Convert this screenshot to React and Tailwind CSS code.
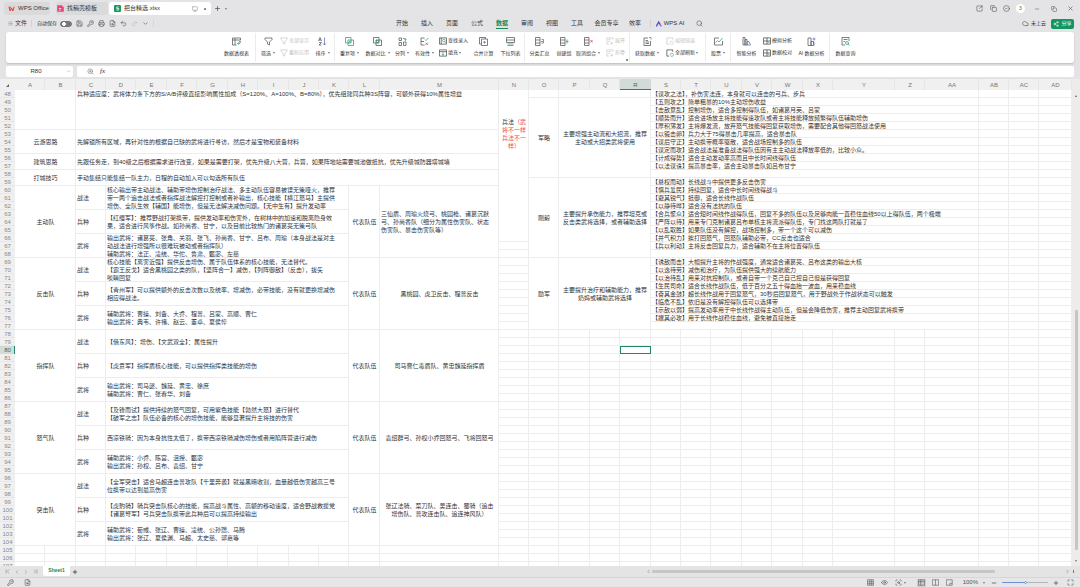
import { useState } from 'react';
import {
  Search, Menu, Save, Printer, Undo2, Redo2, ChevronDown, Plus, Minus, X, Copy, Cloud, Share2,
  ChevronLeft, ChevronRight, ChevronFirst, ChevronLast, Maximize, Eye, Monitor, CircleCheck, SquareArrowOutUpRight,
  ZoomIn, FileSearch, ScanSearch, KeyRound,
} from 'lucide-react';

const COLUMNS = [
  ['A', 'w-[30px]'], ['B', 'w-[31px]'], ['C', 'w-[30px]'], ['D', 'w-[30px]'], ['E', 'w-[31px]'], ['F', 'w-[30px]'],
  ['G', 'w-[31px]'], ['H', 'w-[30px]'], ['I', 'w-[31px]'], ['J', 'w-[30px]'], ['K', 'w-[30px]'], ['L', 'w-[31px]'],
  ['M', 'w-[119px]'], ['N', 'w-[30px]'], ['O', 'w-[30px]'], ['P', 'w-[31px]'], ['Q', 'w-[30px]'], ['R', 'w-[31px]'],
  ['S', 'w-[30px]'], ['T', 'w-[30px]'], ['U', 'w-[31px]'], ['V', 'w-[30px]'], ['W', 'w-[31px]'], ['X', 'w-[30px]'],
  ['Y', 'w-[62px]'], ['Z', 'w-[30px]'], ['AA', 'w-[54px]'], ['AB', 'w-[30px]'], ['AC', 'w-[30px]'], ['AD', ''],
];
const FIRST_ROW = 48;
const LAST_ROW = 107;

const TEAMS = [
  {
    name: '主动队',
    skills: '核心输出带主动战法、辅助带增伤控制治疗战法、多主动队伍容易被误无策哑火，推荐\n带一两个追击战法或者指挥战法解控打控制或者补输出，核心技能【横江怒马】主提供\n增伤、全队生效【辅国】能增伤，但是无法解决减伤问题。【无中生有】提升发动率',
    troops: '【红缨军】：推荐野战打架携带，提供发动率和伤害外，在树林中的加速和脱离隐身效\n果，适合进行风筝作战。如孙尚香、甘宁，以及目前比较热门的诸葛亮无策弓队',
    heroes: '输出武将：诸葛亮、张角、关羽、张飞、孙尚香、甘宁、吕布、周瑜（本身战法是对主\n动战法进行增强所以很难玩被动或者指挥队）\n辅助武将：法正、凌统、华佗、鲁肃、甄宓、左慈',
    squads: '三仙盾、周瑜火烧弓、桃园枪、诸葛沉默\n弓、孙尚香队（细分为属性伤害队、状态\n伤害队、暴击伤害队等）',
    squadsLeft: true,
  },
  {
    name: '反击队',
    skills: '核心技能【离害近强】提供反击增伤、属于队伍体系的核心技能，无法替代。\n【霸王反戈】适合黑桃园之类的队，【坚阵合一】减伤，【列阵御敌】（反击），拔矢\n啖睛回复',
    troops: '【青州军】可以提供额外的反击次数以及统率、增减伤，必带技能，没有就更换增减伤\n相应得战法。',
    heroes: '辅助武将：曹操、刘备、大乔、程普、吕蒙、高顺、曹仁\n输出武将：典韦、许褚、赵云、董卓、夏侯惇',
    squads: '黑桃园、虎卫反击、程普反击',
  },
  {
    name: '指挥队',
    skills: '【借东风】：增伤、【文武双全】：属性提升',
    troops: '【虎贲军】指挥盾核心技能，可以提供指挥类技能的增伤',
    heroes: '输出武将：司马懿、魏延、黄忠、徐庶\n辅助武将：曹仁、张春华、刘备',
    squads: '司马曹仁毒盾队、黄忠魏延指挥盾',
  },
  {
    name: '怒气队',
    skills: '【及锋而试】提供持续的怒气回复，可用紫色技能【勃然大怒】进行替代\n【破军之志】队伍必备的核心的增伤技能，能够显著提升主将技的伤害',
    troops: '西凉铁骑：因为本身抗性太低了，携带西凉铁骑减伤增伤或者用陷阵营进行减伤',
    heroes: '辅助武将：小乔、陈宫、沮授、甄宓\n输出武将：孙权、吕布、袁绍、甘宁',
    squads: '袁绍群弓、孙权小乔回怒弓、飞将回怒弓',
  },
  {
    name: '突击队',
    skills: '【全军突击】适合马超连击普攻队【千里奔袭】就是黑暗收割，血量越低伤害越高三号\n位携带以达到最高伤害',
    troops: '【虎豹骑】骑兵突击队核心的技能，提高战斗属性、高额的移动速度，适合野战救援党\n【诸葛弩军】弓兵突击队携带此兵种后可以提高持续输出',
    heroes: '辅助武将：荀彧、张辽、曹操、凌统、公孙瓒、马腾\n输出武将：张辽、夏侯渊、马超、太史慈、郭嘉等',
    squads: '张辽法骑、菜刀队、吴连击、蜀骑（追击\n增伤队、普攻连击队、追连神风队）',
  },
];

const NOTES = [
  '【谋攻之法】，补伤害法连，本身就可以连击的弓兵、步兵',
  '【五则攻之】简单粗暴的10%主动增伤收益',
  '【击敌意乱】控制增伤，适合多控制得队伍，如诸葛月英、吕蒙',
  '【顺势而升】适合进场放主将技能得速攻队或者主将技能释放频繁得队伍辅助增伤',
  '【厚积薄发】主将爆发流，放弃怒气技能得回复获取增伤，需要配合其他得回怒战法使用',
  '【以锻击卵】兵力大于75得暴击几率提高，适合暴击队',
  '【谋后守正】主动携带概率驱散，适合战场控制多的队伍',
  '【谋定而攻】适合战法是准备战法得队伍因有主主动战法释放率低的，比较小众。',
  '【计成得势】适合主动发动率高而且中长时间线得队伍',
  '【以法谋诛】提高暴击率，适合主动暴击队如吕布甘宁',
  '',
  '【悬权而动】长线战斗中提供更多反击伤害',
  '【慎兵爱民】持续回复，适合中长时间线得战斗',
  '【避其锐气】抵御，适合长线作战队伍',
  '【以静待哗】适合没有法抗的队伍',
  '【合兵聚众】适合短时间线作战得队伍，回复不多的队伍以及足够肉能一直稳住血线50以上得队伍，两个极端',
  '【严阵以待】用来专门克制诸葛吕布单核主将流派得队伍，专门找这两队打就是了',
  '【以乱取胜】如果队伍没有解控，战场控制多，带一个这个可以减伤',
  '【并气积力】挨打回怒气，回怒队辅助必带，CC反击也适合',
  '【兵以利动】主将反击回复兵力，适合辅助不在主将位置得队伍',
  '',
  '【诱敌而击】大幅提升主将的作战强度，通常适合诸葛亮、吕布这类的输出大核',
  '【以逸待劳】减伤和治疗，为队伍提供强大的续航能力',
  '【以治待乱】用来对抗控制队，或者自带一个克己自己控自己但是获得回复',
  '【生民司命】适合长线作战队伍，低于百分之五十得血抬一波血，用来稳血线',
  '【奋其金鼓】超长线作战用于回复怒气，30秒后回复怒气，用于野战处于作战状态可以触发',
  '【临危不乱】依旧是没有解控得队伍可以选择带',
  '【示敌以弱】提高发动率用于中长线作战得主动队伍，但是会降低伤害，推荐主动回复武将携带',
  '【攘其必攻】用于长线作战稳住血线，避免被直接抬走',
  '',
];

const colIndex = Object.fromEntries(COLUMNS.map(([name], i) => [name, i]));

// cell(from column, first row, to column, last row, content, extra classes)
const cell = (c1, r1, c2, r2, text, cls = 'text-left') => ({
  row: r1, col: colIndex[c1], rowSpan: r2 - r1 + 1, colSpan: colIndex[c2] - colIndex[c1] + 1, text, cls,
});

const TACTICS = (
  <>
    <div>兵法<span className="text-[#f04a4a]">（武</span></div>
    <div className="text-[#f04a4a]">将不一样</div>
    <div className="text-[#f04a4a]">兵法不一</div>
    <div className="text-[#f04a4a]">样）</div>
  </>
);

const MERGED = [
  cell('A', 48, 'B', 52, ''),
  cell('C', 48, 'M', 52, '兵种适应度：武将体力条下方的S/A/B评级直接影响属性加成（S=120%、A=100%、B=80%），优先组建同兵种3S阵容，可额外获得10%属性增益', 'text-left align-top'),
  cell('A', 53, 'B', 55, '云游思路', 'text-center'),
  cell('C', 53, 'M', 55, '先解锁所有区域，再针对性的根据自己缺的武将进行寻访，然后才是宝物和装备材料'),
  cell('A', 56, 'B', 57, '建筑思路', 'text-center'),
  cell('C', 56, 'M', 57, '先跟任务走，到40级之后根据需求进行改变，如果是需要打架，优先升级八大营，兵营，如果阵地站需要城池做抵抗，优先升级城防器塔城墙'),
  cell('A', 58, 'B', 59, '打城技巧', 'text-center'),
  cell('C', 58, 'M', 59, '手动集结只能集结一队主力，日程的自动加入可以勾选所有队伍'),
  ...TEAMS.flatMap((team, i) => {
    const top = 60 + i * 9;
    return [
      cell('A', top, 'B', top + 8, team.name, 'text-center'),
      cell('C', top, 'C', top + 2, '战法'),
      cell('D', top, 'K', top + 2, team.skills),
      cell('C', top + 3, 'C', top + 5, '兵种'),
      cell('D', top + 3, 'K', top + 5, team.troops),
      cell('C', top + 6, 'C', top + 8, '武将'),
      cell('D', top + 6, 'K', top + 8, team.heroes),
      cell('L', top, 'L', top + 8, '代表队伍', 'text-center'),
      cell('M', top, 'M', top + 8, team.squads, team.squadsLeft ? 'text-left' : 'text-center'),
    ];
  }),
  cell('N', 48, 'N', 66, TACTICS, 'text-center align-top pt-7'),
  cell('P', 48, 'R', 48, ''),
  cell('O', 49, 'O', 58, '军略', 'text-center'),
  cell('P', 49, 'R', 58, '主要增强主动流和大招流，推荐\n主动或大招类武将使用', 'text-center'),
  cell('O', 59, 'O', 68, '刚毅', 'text-center'),
  cell('P', 59, 'R', 68, '主要提升承伤能力，推荐坦克或\n反击类武将选择，或者辅助选择', 'text-center'),
  cell('O', 69, 'O', 77, '励军', 'text-center'),
  cell('P', 69, 'R', 77, '主要提升治疗和辅助能力，推荐\n奶妈或辅助武将选择', 'text-center'),
  ...NOTES.map((note, i) => cell('S', FIRST_ROW + i, 'AA', FIRST_ROW + i, note)),
];

function buildRows() {
  const anchors = {};
  const covered = new Set();
  MERGED.forEach((m) => {
    anchors[`${m.row}:${m.col}`] = m;
    for (let r = m.row; r < m.row + m.rowSpan; r++) {
      for (let c = m.col; c < m.col + m.colSpan; c++) covered.add(`${r}:${c}`);
    }
  });
  const rows = [];
  for (let r = FIRST_ROW; r <= LAST_ROW; r++) {
    const cells = [];
    COLUMNS.forEach((_, c) => {
      const key = `${r}:${c}`;
      if (anchors[key]) cells.push(anchors[key]);
      else if (!covered.has(key)) cells.push({ row: r, col: c, rowSpan: 1, colSpan: 1, text: '', cls: '' });
    });
    rows.push({ number: r, cells });
  }
  return rows;
}

const ROWS = buildRows();

function Icon({ children, className = 'size-[9px]' }) {
  return (
    <svg viewBox="0 0 18 18" fill="none" stroke="currentColor" strokeWidth="1.5" className={`${className} shrink-0`} aria-hidden="true">
      {children}
    </svg>
  );
}

const G = '#2f9c74';
const B = '#5b6fc0';

const GLYPHS = {
  pivot: <><path d="M1 2h16v4H1zM1 6v10h5V2M6 16h3" /><path d="M11 13h5V9M13 11l-2 2 2 2M14 10l2-2 2 2" stroke={G} /></>,
  filter: <path d="M2 2h14v3l-5 5v6l-4-2v-4L2 5z" />,
  sort: <><path d="M1 8l3-7 3 7M2 6h4M2 11h5l-5 5h5" /><path d="M13 1v15M10 13l3 3 3-3" stroke={B} /></>,
  dupes: <><path d="M1 1h11v11H1z" stroke={G} /><path d="M6 6h11v11H6z" stroke={G} /><path d="M7 11l4-4M9 12l3-3" stroke={G} /></>,
  compare: <><path d="M1 1h11v11H1z" /><path d="M6 6h11v11H6z" /><path d="M7 7h4v4H7z" stroke={G} /></>,
  split: <><path d="M2 2h5v5H2zM2 11h5v6H2zM11 10h5v7h-5z" /><path d="M10 3h5v4M13 5l2 2 2-2" stroke={G} /></>,
  valid: <><path d="M9 2H2v14h7M2 9h6" /><path d="M10 5l2 2 5-5" stroke={G} /><path d="M11 11l5 5M16 11l-5 5" stroke="#d05555" /></>,
  lookup: <><path d="M1 2h16v14H1zM5 2v14" /><circle cx="11" cy="8" r="3" stroke={G} /><path d="M13 10l2 3" stroke={G} /></>,
  fill: <><path d="M1 2h16v14H1zM1 6h16" /><path d="M9 7v7M6 11l3 3 3-3" stroke={G} /></>,
  merge: <><path d="M5 4h12v13H5zM13 4V1H1v13h4" /><path d="M11 8v5M8 10.500h6" stroke={B} /></>,
  list: <><path d="M1 1h16v10H1zM1 6h16" /><path d="M3 14h12M3 17h12" stroke={G} /></>,
  subtotal: <><path d="M1 1h9v16H1zM1 6h9M1 12h9" /><path d="M13 5h4v7h-4M12 9h4" stroke={B} /></>,
  group: <><path d="M1 1h9v16H1zM1 6h9M1 12h9" /><path d="M14 5v8M12 9h5" stroke={G} /></>,
  ungroup: <><path d="M1 1h9v16H1zM1 6h9M1 12h9" /><path d="M13 6l4 5M17 6l-4 5" stroke="#c24a5a" /></>,
  box: <path d="M16 6V2H2v14h5M5 6h6M5 10h4M10 14h6M13 11v6" />,
  getData: <><path d="M10 2H2v15h13V8M5 7h5M5 10h7M5 13h7" /><path d="M12 1h4v4" stroke={G} /></>,
  refresh: <><path d="M15 6V2H2v14h5" /><path d="M9 13a4 4 0 0 1 7-2M17 12a4 4 0 0 1-7 3" stroke={G} /></>,
  links: <path d="M15 6V2H2v14h5M9 13a4 4 0 0 1 7-2M17 12a4 4 0 0 1-7 3" />,
  stock: <><path d="M17 8v8H1V2h9" /><path d="M3 11l4-4 3 3 7-8" stroke={G} /></>,
  smart: <><path d="M2 1h4v15H2zM6 5h4v11H6z" /><path d="M10 9h4l3 7h-7z" stroke={B} /></>,
  simulate: <><path d="M1 2h16v14H1zM1 9h16M9 2v14" /><path d="M11 12h4" stroke={G} /></>,
  aiData: <><path d="M2 2h6v15H2zM8 9h5v8H8z" /><path d="M14 1v6M11 4h6M14 10v7" stroke={B} /></>,
  query: <><path d="M16 8V1H2v15h6M5 5h8M5 9h3" /><circle cx="12" cy="12" r="3" stroke={G} /><path d="M14 14l3 3" stroke={G} /></>,
};

const RIBBON = [
  { icon: 'pivot', label: '数据透视表', width: 'w-[38px]', sep: true },
  { icon: 'filter', label: '筛选', width: 'w-[24px]', menu: true },
  { pair: [['filter', '全部显示'], ['filter', '重新应用']], width: 'w-[31px]', disabled: true },
  { icon: 'sort', label: '排序', width: 'w-[24px]', menu: true, sep: true },
  { icon: 'dupes', label: '重复项', width: 'w-[29px]', menu: true },
  { icon: 'compare', label: '数据对比', width: 'w-[27px]', menu: true },
  { icon: 'split', label: '分列', width: 'w-[22px]', menu: true },
  { icon: 'valid', label: '有效性', width: 'w-[23px]', menu: true },
  { pair: [['lookup', '查找录入'], ['fill', '填充', true]], width: 'w-[34px] pl-[3px]' },
  { icon: 'merge', label: '合并计算', width: 'w-[27px]' },
  { icon: 'list', label: '下拉列表', width: 'w-[28px]', sep: true },
  { icon: 'subtotal', label: '分类汇总', width: 'w-[29px]' },
  { icon: 'group', label: '创建组', width: 'w-[20px]' },
  { icon: 'ungroup', label: '取消组合', width: 'w-[28px]', menu: true },
  { pair: [['box', '展开'], ['box', '折叠']], width: 'w-[28px] pl-[4px]', disabled: true, sep: true, launcher: true },
  { icon: 'getData', label: '获取数据', width: 'w-[34px]', menu: true },
  { pair: [['links', '编辑链接', false, true], ['refresh', '全部刷新', true]], width: 'w-[42px] pl-[2px]', sep: true },
  { icon: 'stock', label: '股票', width: 'w-[25px]', menu: true, sep: true },
  { icon: 'smart', label: '智能分析', width: 'w-[31px]' },
  { pair: [['simulate', '模拟分析'], ['simulate', '数据校对']], width: 'w-[32px] pl-px' },
  { icon: 'aiData', label: 'AI 数据分析', width: 'w-[36px]', sep: true },
  { icon: 'query', label: '数据查询', width: 'w-[31px]' },
];

function Caret() {
  return <span className="border-x-[1px] border-t-2 border-x-transparent border-t-[#777]" />;
}

function RibbonItem({ item }) {
  const border = item.sep ? 'border-r border-[#ececec]' : '';
  if (item.pair) {
    return (
      <div className={`${item.width} ${border} relative flex shrink-0 flex-col gap-[2px] pt-[3px]`}>
        {item.pair.map(([icon, label, menu, off]) => (
          <button key={label} disabled={item.disabled || off} className="flex h-[10px] items-center gap-px whitespace-nowrap disabled:text-[#c4c4c4]">
            <Icon className="size-[8px]">{GLYPHS[icon]}</Icon>
            {label}
            {menu && <Caret />}
          </button>
        ))}
        {item.launcher && <span className="absolute bottom-px right-px size-[2px] bg-[#888]" />}
      </div>
    );
  }
  return (
    <button className={`${item.width} ${border} flex shrink-0 flex-col items-center gap-[3px] pt-1`}>
      <Icon className="size-[9px] text-[#555]">{GLYPHS[item.icon]}</Icon>
      <span className="flex items-center gap-[2px] whitespace-nowrap leading-[8px]">
        {item.label}
        {item.menu && <Caret />}
      </span>
    </button>
  );
}

const tools = [['保存', Save], ['输出', KeyRound], ['打印', Printer], ['打印预览', FileSearch], ['撤销', Undo2], ['恢复', Redo2], ['更多', ChevronDown]];

const TABS = [
  ['开始', 'w-[25px]'], ['插入', 'w-[25px]'], ['页面', 'w-[25px]'], ['公式', 'w-[25px]'], ['数据', 'w-[25px]'], ['审阅', 'w-[25px]'],
  ['视图', 'w-[25px]'], ['工具', 'w-[25px]'], ['会员专享', 'w-[34px]'], ['效率', 'w-[23px]'],
];

function TitleBar() {
  return (
    <header className="flex h-[17px] items-center pl-1 pr-[6px] text-[6px]">
      <button className="flex h-[13px] w-[46px] items-center gap-[3px] whitespace-nowrap rounded-[3px] bg-[#dadadb] pl-1">
        <Icon className="h-[6px] w-[7px] text-[#e4393c]"><path d="M1 2l4 13 4-9 4 9 4-13M5 2l3 5" strokeWidth="3" /></Icon>
        WPS Office
      </button>
      <button className="ml-[6px] flex h-[13px] w-[52px] items-center gap-[3px] rounded-[3px] bg-[#dadadb] pl-px">
        <Icon className="size-[7px]"><path d="M1 1h11l5 5v11H1z" fill="#e8467c" stroke="#e8467c" /><path d="M5 9h6M5 13h4" stroke="#fff" strokeWidth="2" /></Icon>
        找稿壳模板
      </button>
      <button className="ml-px flex h-[13px] w-[102px] items-center rounded-[3px] bg-white pl-[5px] pr-[5px]">
        <Icon className="size-[7px]"><rect width="18" height="18" rx="3" fill="#13995f" stroke="none" /><path d="M12 5H7v4h5v4H6" stroke="#fff" strokeWidth="2" /></Icon>
        <span className="ml-[3px]">把台精选.xlsx</span>
        <Monitor className="ml-auto size-[6px] text-[#888]" />
        <span className="ml-[6px] size-[2px] rounded-full bg-[#666]" />
      </button>
      <button aria-label="新建" className="ml-[3px]"><Plus className="size-[7px]" /></button>
      <span className="ml-[4px] flex"><Caret /></span>
      <div className="ml-auto flex items-center text-[#555]">
        <button aria-label="快捷面板"><SquareArrowOutUpRight className="size-[7px]" /></button>
        <button aria-label="窗口" className="ml-[7px]"><Copy className="size-[7px]" /></button>
        <button aria-label="应用" className="ml-[6px]"><CircleCheck className="size-[7px]" /></button>
        <span className="ml-[6px] flex size-[9px] items-center justify-center rounded-full bg-white text-[5px]">3</span>
        <button aria-label="最小化" className="ml-[9px]"><Minus className="size-[6px]" /></button>
        <button aria-label="还原" className="ml-[11px]"><Copy className="size-[6px]" /></button>
        <button aria-label="关闭" className="ml-[10px]"><X className="size-[7px]" /></button>
      </div>
    </header>
  );
}

function MenuBar() {
  return (
    <nav className="flex h-[13px] items-center pr-[6px] text-[6px]">
      <div className="mr-[3px] flex w-[36%] shrink-0 items-center pl-2">
        <button className="flex items-center gap-[2px]"><Menu className="size-[5px] text-[#777]" />文件</button>
        <span className="ml-[4px] h-[7px] w-px bg-[#d0d0d0]" />
        <label htmlFor="autosave" className="ml-[5px] text-[5px]">自动保存</label>
        <input id="autosave" type="checkbox" className="ml-[3px] h-[6px] w-[12px] appearance-none rounded-full border border-[#777] bg-[radial-gradient(circle_at_3px_2px,white_2px,#777_2px)]" />
        <div className="ml-[4px] flex items-center gap-[4px] text-[#555]">
          {tools.map(([label, Tool]) => (
            <button key={label} aria-label={label} disabled={label === '恢复'} className="disabled:text-[#bbb]"><Tool className="size-[7px]" /></button>
          ))}
        </div>
        <span className="ml-[4px] h-[7px] w-px bg-[#d6d6d6]" />
      </div>
      {TABS.map(([label, width]) => (
        <button key={label} className={`${width} flex h-[13px] shrink-0 flex-col items-center justify-center`}>
          <span className={label === '数据' ? 'border-b border-[#13895a] font-bold leading-[9px] text-[#13895a]' : 'border-b border-transparent leading-[9px]'}>{label}</span>
        </button>
      ))}
      <span className="ml-[3px] h-[7px] w-px bg-[#d0d0d0]" />
      <button className="ml-[5px] flex items-center gap-[2px] whitespace-nowrap">
        <Icon className="size-[6px]"><path d="M1 16L8 3l4 7" stroke="#4a4fd0" strokeWidth="4" /><path d="M11 9l5 7" stroke="#a45be0" strokeWidth="4" /></Icon>
        WPS AI
      </button>
      <button aria-label="搜索" className="ml-[12px]"><Search className="size-[7px] text-[#555]" /></button>
      <button className="ml-auto flex items-center gap-[2px] text-[5px]"><Cloud className="size-[7px] text-[#555]" />未上云</button>
      <button className="ml-[5px] flex h-[10px] w-[23px] items-center justify-center gap-[2px] rounded-[2px] bg-[#149662] text-[5px] text-white">
        <Share2 className="size-[6px]" />分享
      </button>
    </nav>
  );
}

function Sheet({ selected, onSelect }) {
  return (
    <table className="w-full table-fixed border-separate border-spacing-0 bg-white text-[6px] leading-[8px] text-[#333]">
      <colgroup>
        <col className="w-[15px]" />
        {COLUMNS.map(([name, width]) => <col key={name} className={width} />)}
      </colgroup>
      <thead>
        <tr>
          <th className="h-[11px] bg-[#f0f0f0] p-0" aria-label="全选">
            <svg viewBox="0 0 4 4" className="ml-[6px] mt-[2px] size-[3px]"><path d="M4 0v4H0z" fill="#666" /></svg>
          </th>
          {COLUMNS.map(([name], c) => (
            <th
              key={name}
              className={c === selected.col
                ? 'h-[11px] bg-[#d2dbd7] p-0 font-normal text-[#3a6b57] shadow-[inset_0_-1px_0_#1f8a60]'
                : 'h-[11px] bg-[#f0f0f0] p-0 font-normal text-[#777] shadow-[inset_-1px_0_0_#e6e6e6]'}
            >
              {name}
            </th>
          ))}
        </tr>
      </thead>
      <tbody>
        {ROWS.map(({ number, cells }) => (
          <tr key={number}>
            <th
              className={number === selected.row
                ? 'h-[8px] bg-[#d2dbd7] p-0 font-normal text-[#3a6b57] shadow-[inset_-1px_0_0_#1f8a60]'
                : 'h-[8px] bg-[#f0f0f0] p-0 font-normal text-[#888] shadow-[inset_0_-1px_0_#e8e8e8]'}
            >
              {number}
            </th>
            {cells.map((item) => {
              const active = item.row === selected.row && item.col === selected.col;
              return (
                <td
                  key={item.col}
                  rowSpan={item.rowSpan}
                  colSpan={item.colSpan}
                  onClick={() => onSelect({ row: item.row, col: item.col })}
                  className={`h-[8px] whitespace-pre px-px py-0 ${item.cls} ${active ? 'shadow-[inset_0_0_0_1px_#1f8a60]' : 'shadow-[inset_-1px_-1px_0_#ededed]'}`}
                >
                  {item.text}
                </td>
              );
            })}
          </tr>
        ))}
      </tbody>
    </table>
  );
}

function StatusBar({ zoom, onZoom }) {
  return (
    <footer className="flex h-[10px] shrink-0 items-center border-t border-[#d6d6d6] bg-[#e6e6e7] pl-[7px] pr-[6px] text-[6px] text-[#555]">
      <button aria-label="模式"><KeyRound className="size-[7px]" /></button>
      <button aria-label="校对" className="ml-[10px]"><FileSearch className="size-[7px]" /></button>
      <div className="ml-auto flex items-center">
        <Icon className="size-[7px]"><path d="M1 2h16v14H1zM1 7h16M1 12h16M7 2v14M12 2v14" /></Icon>
        <Eye className="ml-[7px] size-[7px]" />
        <ScanSearch className="ml-[7px] size-[7px]" />
        <span className="ml-[2px] flex"><Caret /></span>
        <button aria-label="普通视图" className="ml-[11px] flex h-[8px] w-[9px] items-center justify-center bg-[#cfcfcf]"><Icon className="size-[7px]"><path d="M1 2h16v14H1zM1 7h16M7 2v14" /></Icon></button>
        <button aria-label="分页预览" className="ml-[6px]"><Icon className="size-[7px]"><path d="M1 2h16v14H1zM9 2v14" /></Icon></button>
        <button aria-label="页面布局" className="ml-[7px]"><Icon className="size-[7px]"><path d="M1 2h15v14H1zM16 11h-6v5" /></Icon></button>
        <span className="ml-[10px]">{zoom}%</span>
        <span className="ml-[5px] flex"><Caret /></span>
        <button aria-label="缩小" className="ml-[6px]"><Minus className="size-[6px]" strokeWidth={3} /></button>
        <input
          type="range" min="0" max="200" value={zoom} aria-label="缩放" onChange={(e) => onZoom(Number(e.target.value))}
          className="ml-[5px] h-px w-[46px] appearance-none bg-[linear-gradient(to_right,#6f8fd8_50%,#b4b4b4_50%)] [&::-webkit-slider-thumb]:size-[3px] [&::-webkit-slider-thumb]:appearance-none [&::-webkit-slider-thumb]:rounded-full [&::-webkit-slider-thumb]:border [&::-webkit-slider-thumb]:border-[#6f8fd8] [&::-webkit-slider-thumb]:bg-white"
        />
        <button aria-label="放大" className="ml-[5px]"><Plus className="size-[6px]" strokeWidth={3} /></button>
        <button aria-label="全屏" className="ml-[8px]"><Maximize className="size-[7px]" /></button>
      </div>
    </footer>
  );
}

export default function App() {
  const [selected, setSelected] = useState({ row: 80, col: colIndex.R });
  const [zoom, setZoom] = useState(100);
  const ref = `${COLUMNS[selected.col][0]}${selected.row}`;

  return (
    <div lang="zh-CN" className="flex h-screen flex-col overflow-hidden bg-[#e4e4e6] font-['Liberation_Sans','Noto_Sans_CJK_SC',sans-serif] text-[#333]">
      <TitleBar />
      <MenuBar />

      <div className="mx-[6px] mt-[2px] flex h-[31px] shrink-0 overflow-hidden rounded-[3px] bg-white py-px pl-[212px] text-[5px] shadow-[0_1px_2px_#bdbdbd]">
        {RIBBON.map((item) => <RibbonItem key={item.label ?? item.pair[0][1]} item={item} />)}
      </div>

      <div className="mx-[6px] mt-[3px] flex h-[11px] shrink-0 gap-1 text-[6px]">
        <div className="flex w-[67px] items-center rounded-[2px] bg-white pr-[2px]">
          <input aria-label="名称框" value={ref} readOnly className="w-full min-w-0 text-center outline-none" />
          <ChevronDown className="size-[5px] shrink-0 text-[#888]" />
        </div>
        <div className="flex flex-1 items-center rounded-[2px] bg-white pl-[10px]">
          <button aria-label="查找"><ZoomIn className="size-[7px] text-[#777]" /></button>
          <label htmlFor="formula" className="ml-[6px] font-['Liberation_Serif',serif] text-[7px] italic">fx</label>
          <input id="formula" className="ml-2 min-w-0 flex-1 outline-none" />
        </div>
      </div>

      <main className="mt-[2px] flex min-h-0 flex-1">
        <div className="min-w-0 flex-1 overflow-hidden">
          <Sheet selected={selected} onSelect={setSelected} />
        </div>
        <div className="flex w-[8px] shrink-0 flex-col items-center bg-[#ececec] pb-[4px] pt-[16px]">
          <span className="border-x-[1px] border-b-2 border-x-transparent border-b-[#666]" />
          <div className="flex w-[3px] flex-1 flex-col">
            <div className="flex-[47]" />
            <div className="flex-[53] rounded-[1px] bg-[#c6c6c6]" />
          </div>
          <span className="mt-[10px] flex"><Caret /></span>
        </div>
      </main>

      <div className="flex h-[11px] shrink-0 items-center bg-[#e4e4e5] pl-1 pr-[6px] text-[6px] text-[#888]">
        <button aria-label="第一张"><ChevronFirst className="size-[7px]" /></button>
        <button aria-label="上一张" className="ml-[3px]"><ChevronLeft className="size-[6px]" /></button>
        <button aria-label="下一张" className="ml-[3px]"><ChevronRight className="size-[6px]" /></button>
        <button aria-label="最后一张" className="ml-[3px]"><ChevronLast className="size-[7px]" /></button>
        <button className="ml-[4px] flex h-[10px] w-[27px] items-center justify-center self-start rounded-b-[2px] bg-white text-[5px] font-bold text-[#14895a]">Sheet1</button>
        <button aria-label="新建工作表" className="ml-[2px] text-[#333]"><Plus className="size-[6px]" strokeWidth={3} /></button>
        <div className="ml-auto flex w-[40%] items-center">
          <ChevronLeft className="size-[5px] shrink-0 text-[#555]" />
          <div className="ml-px flex flex-1">
            <div className="h-[3px] flex-[83] rounded-[1px] bg-[#c6c6c6]" />
            <div className="flex-[17]" />
          </div>
          <ChevronRight className="size-[5px] shrink-0 text-[#555]" />
          <span className="ml-[3px] h-[3px] w-px bg-[#777]" />
        </div>
      </div>
      <StatusBar zoom={zoom} onZoom={setZoom} />
    </div>
  );
}
